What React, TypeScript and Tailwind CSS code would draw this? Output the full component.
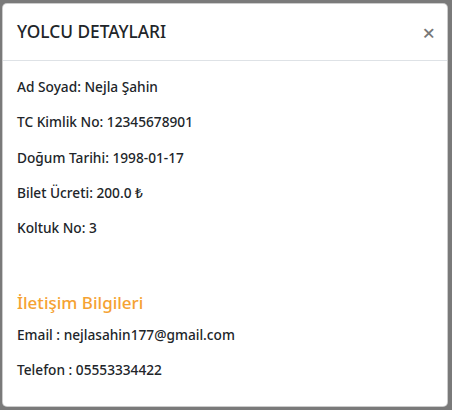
import React from "react";

const rows = [
  "Ad Soyad: Nejla Şahin",
  "TC Kimlik No: 12345678901",
  "Doğum Tarihi: 1998-01-17",
  "Bilet Ücreti: 200.0 ₺",
  "Koltuk No: 3",
];

const App = () => {
  return (
    <div
      className="w-[452px] h-[410px] bg-[#7a7a7a] pt-[3px] pl-[2px] pr-[4px] pb-[3px] text-[#212529]"
      style={{ fontFamily: '"Noto Sans", "Open Sans", sans-serif' }}
    >
      <div className="h-full bg-white rounded-[5px] border border-black/20 flex flex-col">
        <div className="flex items-center justify-between pl-[14px] pr-[12px] h-[57px] border-b border-[#dee2e6]">
          <h5 className="text-[17.3px] leading-6 font-medium">YOLCU DETAYLARI</h5>
          <button className="text-[22px] leading-none text-[#777] font-medium">×</button>
        </div>
        <div className="px-[14px] pt-[15px] text-[13.7px]">
          {rows.map((r) => (
            <p key={r} className="leading-[21px] mb-[14.3px] font-medium">
              {r}
            </p>
          ))}
          <h5 className="mt-[54px] mb-[10px] text-[17px] leading-[22px] font-medium text-[#f5a232]">
            İletişim Bilgileri
          </h5>
          <p className="leading-[21px] mb-[14px] font-medium">
            Email : nejlasahin177@gmail.com
          </p>
          <p className="leading-[21px] font-medium">Telefon : 05553334422</p>
        </div>
      </div>
    </div>
  );
};

export default App;
